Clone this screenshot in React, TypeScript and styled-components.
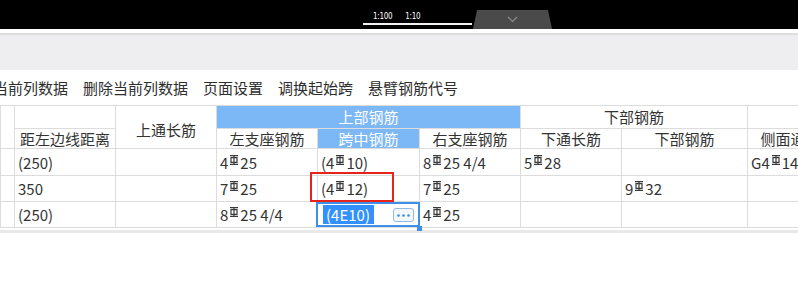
import React from 'react';
import styled, { createGlobalStyle } from 'styled-components';

const GlobalStyle = createGlobalStyle`
  html, body {
    margin: 0;
    padding: 0;
    background: #fff;
    overflow: hidden;
  }
  body {
    font-family: "Noto Sans CJK SC", "Noto Sans", sans-serif;
    color: #333;
  }
`;

const Page = styled.div`
  width: 798px;
  height: 286px;
  overflow: hidden;
  background: #fff;
`;

const TopBar = styled.div`
  height: 29px;
  background: #000;
  display: flex;
  align-items: flex-end;
  padding-left: 363px;
`;

const ScaleTabs = styled.div`
  width: 99px;
  height: 14px;
  margin-bottom: 4px;
  padding-left: 10px;
  border-bottom: 2px solid #f2f2f2;
  display: flex;
  align-items: center;
  gap: 13px;
  font-family: "Liberation Sans Narrow", "DejaVu Sans Condensed", sans-serif;
  font-size: 8px;
  color: #fff;
  letter-spacing: -0.3px;
`;

const ViewTab = styled.div`
  width: 79px;
  height: 19px;
  margin-left: 1px;
  background: #4a4a4a;
  border-radius: 4px 4px 0 0;
  clip-path: polygon(4px 0, calc(100% - 4px) 0, 100% 100%, 0 100%);
  display: flex;
  align-items: center;
  justify-content: center;
  color: #8d8d8d;
`;

const WhiteStrip = styled.div`
  height: 4px;
  background: #fff;
  border-bottom: 2px solid #dedede;
`;

const Band = styled.div`
  height: 35px;
  background: #eeeef0;
`;

const Toolbar = styled.div`
  height: 35px;
  margin-left: -37px;
  display: flex;
  align-items: center;
  gap: 15px;
  font-size: 15px;
  color: #2e2e2e;
  white-space: nowrap;
`;

const ToolItem = styled.span`
  line-height: 20px;
`;

const Grid = styled.table`
  border-collapse: collapse;
  table-layout: fixed;
  width: 848px;
  font-size: 15px;
  color: #333;
`;

const Col = styled.col<{ $w: number }>`
  width: ${(p) => p.$w}px;
`;

const HeadRow = styled.tr<{ $h: number }>`
  height: ${(p) => p.$h}px;
`;

const HeadCell = styled.th<{ $blue?: boolean; $pad?: number }>`
  border: 1px solid #dcdcdc;
  padding: ${(p) => p.$pad ?? 0}px 0 0;
  font-weight: normal;
  text-align: center;
  vertical-align: middle;
  white-space: nowrap;
  overflow: hidden;
  line-height: 18px;
  background: ${(p) => (p.$blue ? '#7cb7f6' : '#fff')};
  color: ${(p) => (p.$blue ? '#fff' : '#333')};
`;

const DataRow = styled.tr<{ $h: number }>`
  height: ${(p) => p.$h}px;
`;

const Cell = styled.td`
  position: relative;
  border: 1px solid #dcdcdc;
  padding: 1px 0 0 3px;
  white-space: nowrap;
  overflow: visible;
  line-height: 20px;
  vertical-align: middle;
`;

const RebarMark = styled.svg`
  display: inline-block;
  width: 10px;
  height: 10px;
  margin: 0 1px 0 1px;
  vertical-align: 4px;
`;

const Marker = styled.div`
  position: absolute;
  left: -8px;
  top: -4px;
  width: 80px;
  height: 26px;
  border: 2px solid #e8231b;
  pointer-events: none;
`;

const EditBox = styled.div`
  position: absolute;
  left: -2px;
  top: 0px;
  right: -1px;
  bottom: 0px;
  border: 2px solid #3d8fe8;
  display: flex;
  align-items: center;
  padding-left: 5px;
  background: #fff;
`;

const Selected = styled.span`
  background: #3390ff;
  color: #fff;
  line-height: 19px;
  padding: 0 4px 0 3px;
`;

const MoreButton = styled.span`
  position: absolute;
  right: 4px;
  top: 4px;
  width: 19px;
  height: 12px;
  border: 1px solid #8fb9ea;
  border-radius: 3px;
  background: #f4f8fd;
  display: flex;
  align-items: center;
  justify-content: center;
`;

const Handle = styled.span`
  position: absolute;
  right: -4px;
  bottom: -6px;
  width: 5px;
  height: 5px;
  background: #3d8fe8;
`;

const ScrollLine = styled.div`
  height: 3px;
  margin-top: 2px;
  background: #e9e9e9;
`;

const Rebar = () => (
  <RebarMark viewBox="0 0 10 10">
    <path
      d="M1 0.6H9M1 9.4H9M5 0.6V9.4M2 2.6H8V7.4H2Z"
      stroke="#3a3a3a"
      strokeWidth="1.2"
      fill="none"
    />
  </RebarMark>
);

const Bar: React.FC<{ text: string }> = ({ text }) => {
  const parts = text.split('Φ');
  return (
    <>
      {parts.map((p, i) => (
        <React.Fragment key={i}>
          {i > 0 && <Rebar />}
          {p}
        </React.Fragment>
      ))}
    </>
  );
};

const widths = [14, 101, 101, 101, 102, 101, 101, 126, 101];

const rows: string[][] = [
  ['', '(250)', '', '4Φ25', '(4Φ10)', '8Φ25 4/4', '5Φ28', '', 'G4Φ14'],
  ['', '350', '', '7Φ25', '(4Φ12)', '7Φ25', '', '9Φ32', ''],
  ['', '(250)', '', '8Φ25 4/4', '(4E10)', '4Φ25', '', '', ''],
];

const tools = ['插入当前列数据', '删除当前列数据', '页面设置', '调换起始跨', '悬臂钢筋代号'];

export default function App() {
  return (
    <Page>
      <GlobalStyle />
      <TopBar>
        <ScaleTabs>
          <span>1:100</span>
          <span>1:10</span>
        </ScaleTabs>
        <ViewTab>
          <svg width="11" height="7" viewBox="0 0 11 7">
            <path d="M1 1L5.5 5.5L10 1" stroke="currentColor" strokeWidth="1.2" fill="none" />
          </svg>
        </ViewTab>
      </TopBar>
      <WhiteStrip />
      <Band />
      <Toolbar>
        {tools.map((t) => (
          <ToolItem key={t}>{t}</ToolItem>
        ))}
      </Toolbar>
      <Grid>
        <colgroup>
          {widths.map((w, i) => (
            <Col key={i} $w={w} />
          ))}
        </colgroup>
        <thead>
          <HeadRow $h={23}>
            <HeadCell rowSpan={2} />
            <HeadCell />
            <HeadCell rowSpan={2} $pad={6}>
              上通长筋
            </HeadCell>
            <HeadCell colSpan={3} $blue>
              上部钢筋
            </HeadCell>
            <HeadCell colSpan={2}>下部钢筋</HeadCell>
            <HeadCell />
          </HeadRow>
          <HeadRow $h={20}>
            <HeadCell>距左边线距离</HeadCell>
            <HeadCell>左支座钢筋</HeadCell>
            <HeadCell $blue>跨中钢筋</HeadCell>
            <HeadCell>右支座钢筋</HeadCell>
            <HeadCell>下通长筋</HeadCell>
            <HeadCell>下部钢筋</HeadCell>
            <HeadCell>侧面通长筋</HeadCell>
          </HeadRow>
        </thead>
        <tbody>
          {rows.map((r, ri) => (
            <DataRow key={ri} $h={ri === 0 ? 27 : 26}>
              {r.map((c, ci) => {
                if (ri === 2 && ci === 4) {
                  return (
                    <Cell key={ci}>
                      <EditBox>
                        <Selected>{c}</Selected>
                        <MoreButton>
                          <svg width="13" height="3" viewBox="0 0 13 3">
                            <circle cx="1.5" cy="1.5" r="1.3" fill="#3d8fe8" />
                            <circle cx="6.5" cy="1.5" r="1.3" fill="#3d8fe8" />
                            <circle cx="11.5" cy="1.5" r="1.3" fill="#3d8fe8" />
                          </svg>
                        </MoreButton>
                        <Handle />
                      </EditBox>
                    </Cell>
                  );
                }
                return (
                  <Cell key={ci}>
                    <Bar text={c} />
                    {ri === 1 && ci === 4 && <Marker />}
                  </Cell>
                );
              })}
            </DataRow>
          ))}
        </tbody>
      </Grid>
      <ScrollLine />
    </Page>
  );
}
